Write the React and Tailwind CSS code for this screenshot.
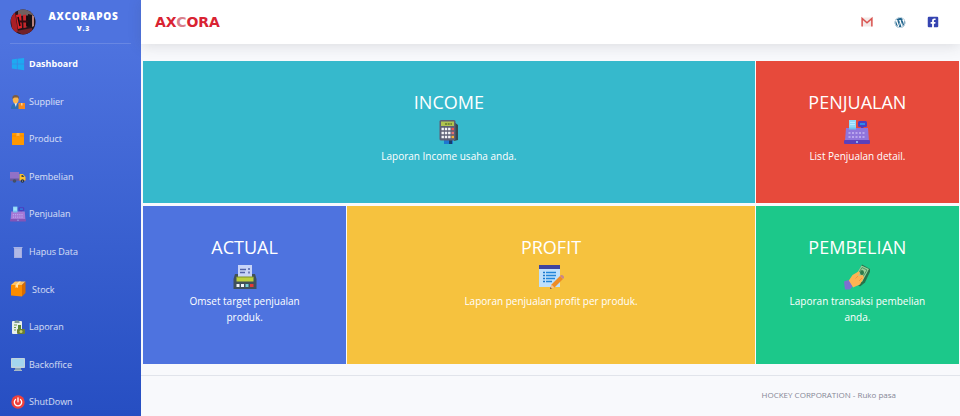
import React from "react";
import { FaWindows, FaWordpress, FaFacebookSquare } from "react-icons/fa";

const Svg = ({ box = 16, className = "h-4 w-4", children }) => (
  <svg viewBox={`0 0 ${box} ${box}`} className={className} aria-hidden="true">
    {children}
  </svg>
);

const SupplierIcon = () => (
  <Svg>
    <path d="M1 15c0-4 2-5.500 4.500-5.500S10 11 10 15z" fill="#2f6fb5" />
    <path d="M4.500 9h2.500l-1.200 4z" fill="#e8eef5" />
    <ellipse cx="5.700" cy="5.800" rx="2.900" ry="3.700" fill="#fdb74b" />
    <path d="M2.500 5C2 2 3.500 1 5.700 1S9.400 2 9 5L7.500 3.600h-3z" fill="#7a5c45" />
    <rect x="8.500" y="9" width="6.500" height="6" fill="#f68a1f" />
    <rect x="11" y="9" width="1.500" height="2.500" fill="#ffd08a" />
  </Svg>
);

const ProductIcon = () => (
  <Svg>
    <rect x="2" y="2" width="12" height="12" rx=".5" fill="#ff9800" />
    <path d="M2 5h12" stroke="#f08300" strokeWidth=".7" />
    <path d="M6.500 2h3v3.500l-1.500-.8-1.500.8z" fill="#ffb547" />
  </Svg>
);

const TruckIcon = () => (
  <Svg>
    <rect x="0" y="3" width="9" height="8" fill="#9271c6" />
    <rect x="0" y="9.500" width="15.500" height="2.500" fill="#66599f" />
    <path d="M9.500 5h3.500l2.500 3v3.500h-6z" fill="#fbc02d" />
    <path d="M11.500 6h1.300l1.500 2h-2.800z" fill="#374957" />
    <circle cx="4.500" cy="12" r="1.800" fill="#455064" />
    <circle cx="12.500" cy="12" r="1.800" fill="#2b3443" />
    <circle cx="12.500" cy="12" r=".6" fill="#b0bec5" />
  </Svg>
);

const RegisterIcon = ({ big = false }) => (
  <Svg box={26} className={big ? "h-[26px] w-[26px]" : "h-4 w-4"}>
    <rect x="5" y="1" width="7" height="10" fill="#8fd8f7" />
    <path d="M6 3.500h5M6 5.500h5" stroke="#b9ebff" />
    <rect x="17" y="6" width="2.500" height="4" fill="#5e35b1" />
    <rect x="14" y="2" width="9" height="6" rx="1.500" fill="#4a3fc0" />
    <rect x="16" y="4" width="5" height="2" fill="#2c8be8" />
    <path d="M2 9h22l1 13H1z" fill={big ? "#9075dc" : "#a678d5"} />
    <path d="M5 8.500h7v2H5z" fill="#70c3ed" />
    <path d="M4.500 14h17M4.500 18h17" stroke="#b9a6ee" strokeWidth="1.800" strokeDasharray="2 1.500" />
    <rect x="0" y="21" width="26" height="4" rx="1" fill={big ? "#5a40bc" : "#8254b8"} />
    <circle cx="13" cy="23" r="1" fill="#9ccbff" />
  </Svg>
);

const TrashIcon = () => (
  <Svg>
    <path d="M4 4h8v10H4z" fill="#a5aee2" />
    <path d="M3.500 3.500h9M6 5v8M8 5v8M10 5v8" stroke="#c3c9ee" strokeWidth=".8" />
  </Svg>
);

const StockIcon = () => (
  <Svg>
    <path d="M1 4l4-3.500h10.500L12 4z" fill="#ffc263" />
    <path d="M1 4h11v11.500L1 14.500z" fill="#fb8c00" />
    <path d="M12 4l3.500-3.500V12L12 15.500z" fill="#d96c00" />
    <path d="M5.500 4l3.500-3.500h2L8 4v3l-1.200-.8L5.500 7z" fill="#ffe2a8" />
  </Svg>
);

const ReportIcon = () => (
  <Svg>
    <rect x="2" y="2" width="10" height="13" rx="1" fill="#e8efec" />
    <path d="M4.500 2.500Q7 0 9.500 2.500v1.500h-5z" fill="#7d9792" />
    <path d="M4 6h3M4 8.500h2M4 11h2" stroke="#769d45" strokeWidth="1.100" />
    <rect x="8" y="6" width="3" height="4" fill="#57873a" />
    <rect x="7" y="10" width="8" height="5" rx="1" fill="#6c7f32" />
    <circle cx="11" cy="12.500" r="1.500" fill="#c6ce72" />
  </Svg>
);

const MonitorIcon = () => (
  <Svg>
    <path d="M5.500 11h5l1 3.500h-7z" fill="#8ca5b6" />
    <rect x="1" y="2" width="14" height="10" rx=".7" fill="#c2d3dc" />
    <rect x="2" y="3" width="12" height="7.500" fill="#a4d5ee" />
    <path d="M4 14.500h8" stroke="#a9bac5" />
  </Svg>
);

const PowerIcon = () => (
  <Svg>
    <circle cx="8" cy="8" r="6.700" fill="#f0413b" />
    <path d="M5.500 5.400a3.700 3.700 0 1 0 5 0M8 3.800v4" fill="none" stroke="#fff" strokeWidth="1.300" strokeLinecap="round" />
  </Svg>
);

const GmailIcon = () => (
  <Svg className="h-3 w-3">
    <rect x="1" y="2" width="14" height="12" rx="1" fill="#f3e9e8" />
    <path d="M1.500 14V3.200L8 9l6.500-5.800V14" fill="none" stroke="#d9534f" strokeWidth="2" />
  </Svg>
);

const FacebookIcon = () => <FaFacebookSquare className="h-3 w-3 text-[#3544b1]" />;

const Avatar = () => (
  <Svg box={26} className="h-[26px] w-[26px] shrink-0">
    <defs>
      <clipPath id="avatar-disc">
        <circle cx="13" cy="13" r="12.500" />
      </clipPath>
    </defs>
    <g clipPath="url(#avatar-disc)">
      <rect width="26" height="26" fill="#251419" />
      <path d="M0 6l5-3 3 20-5 2z" fill="#a91f26" />
      <path d="M8 0h14l3 6-17 1z" fill="#71605f" />
      <path d="M6 6l5-1 1 14-4 1z" fill="#e02328" />
      <path d="M13 6l3-.5.500 13-3 .5z" fill="#c5272c" />
      <path d="M18 5l4 1v11l-4 1z" fill="#181014" />
      <path d="M8 8l2 9M17 7v10" stroke="#12080b" strokeWidth="1.500" />
      <path d="M9 12.500h9" stroke="#320b10" strokeWidth="2" />
      <path d="M22 6l2 1v10l-2 1z" fill="#b8837e" />
      <path d="M6 22l16-3v4l-9 3z" fill="#722128" />
    </g>
  </Svg>
);

const CalculatorIcon = () => (
  <Svg box={26} className="h-[26px] w-[26px]">
    <path d="M18 3l4 3v15l-4 1z" fill="#36484e" />
    <path d="M8 20h9v5H8z" fill="#1d77d2" />
    <path d="M13 21h3v4h-3z" fill="#173e6d" />
    <rect x="3.500" y="1" width="16" height="20.500" rx="1.500" fill="#5c5f75" />
    <rect x="5" y="2.500" width="13" height="4.500" fill="#b0c34f" />
    <path d="M9 5h7" stroke="#5f7a2d" strokeWidth="1.500" strokeDasharray="2 .7" />
    <path d="M5.500 10h9M5.500 14h9M5.500 18h9" stroke="#f2f2f6" strokeWidth="2.400" strokeDasharray="2.400 .9" />
    <path d="M15.500 8.800H18v2.400h-2.500z" fill="#ef5350" />
    <path d="M15.500 12.800H18v2.400h-2.500z" fill="#e57373" />
    <path d="M15.500 16.800H18v2.400h-2.500z" fill="#f9b233" />
  </Svg>
);

const PrinterIcon = () => (
  <Svg box={26} className="h-[26px] w-[26px]">
    <path d="M3 10h20l1.500 5v10h-23V15z" fill="#40505a" />
    <path d="M6 1h14v12H6z" fill="#c8d4f8" />
    <path d="M8 5.500h6M8 8.500h5" stroke="#5262a8" strokeWidth="1.300" />
    <path d="M17 4v2M17 7.500v2" stroke="#5262a8" strokeWidth="1.500" />
    <rect x="4.500" y="13" width="17" height="4.500" fill="#bdd03d" />
    <path d="M4.500 13h17" stroke="#7e922a" />
    <path d="M4.500 20h3v3h-3zM9 20h3v3H9z" fill="#f4f6fa" />
    <path d="M13.500 20h3v3h-3z" fill="#78d1d6" />
    <path d="M18 20h3.500v3H18z" fill="#e53935" />
  </Svg>
);

const NotesIcon = () => (
  <Svg box={26} className="h-[26px] w-[26px]">
    <rect x="1" y="1" width="21" height="22" fill="#bfe0fb" />
    <rect x="1" y="1" width="21" height="4" fill="#3f459e" />
    <path d="M5 8.500h2M5 11.500h2M5 14.500h2M5 17.500h2" stroke="#1c78cc" strokeWidth="1.300" />
    <path d="M8 8.500h10M8 11.500h10M8 14.500h9M8 17.500h6" stroke="#2386d9" strokeWidth="1.300" />
    <path d="M12 25l1.500-4.500L22 12l3 3-8.500 8.500z" fill="#ee8b25" />
    <path d="M22 12l1-1q1.500-.5 2.500 1t.5 2l-1 1z" fill="#c98789" />
    <path d="M12 25l1.500-4.500 3 3z" fill="#f7c38a" />
    <path d="M12 25l.6-1.800 1.200 1.200z" fill="#5b4138" />
  </Svg>
);

const MoneyIcon = () => (
  <Svg box={26} className="h-[26px] w-[26px]">
    <path d="M18 .5l9 5-6 13-5 4-7-5z" fill="#26734b" />
    <path d="M17.500 1.500L25 5l-7 13-8-4z" fill="#9ad09a" />
    <path d="M18 3.500l5 2.500-6 10-5-2.500z" fill="none" stroke="#3b8656" strokeWidth=".8" />
    <ellipse cx="18" cy="8.500" rx="2" ry="2.500" fill="#2f7a4b" />
    <path d="M4.500 17l4-6 6-3.500q2 .5 1 2.500l-1.500 2 4-1q2.500 1 1.500 3.500l-3.500 6-7 3z" fill="#fdb353" />
    <path d="M14 12l-2.500 2.500M18 14l-3 3" fill="none" stroke="#e8923a" strokeWidth=".8" />
    <path d="M0 17.500l4.500-1.500 4 6.500-2.500 3H1z" fill="#7d6fd0" />
  </Svg>
);

const navItems = [
  { label: "Dashboard", icon: <FaWindows className="h-3.5 w-3.5 text-[#1eaaf1]" />, active: true },
  { label: "Supplier", icon: <SupplierIcon /> },
  { label: "Product", icon: <ProductIcon /> },
  { label: "Pembelian", icon: <TruckIcon /> },
  { label: "Penjualan", icon: <RegisterIcon /> },
  { label: "Hapus Data", icon: <TrashIcon /> },
  { label: "Stock", icon: <StockIcon />, wide: true },
  { label: "Laporan", icon: <ReportIcon /> },
  { label: "Backoffice", icon: <MonitorIcon /> },
  { label: "ShutDown", icon: <PowerIcon /> },
];

const cards = [
  { title: "INCOME", text: "Laporan Income usaha anda.", icon: <CalculatorIcon />, style: "col-span-3 bg-[#36b9cc]" },
  { title: "PENJUALAN", text: "List Penjualan detail.", icon: <RegisterIcon big />, style: "bg-[#e74a3b]" },
  { title: "ACTUAL", text: "Omset target penjualan produk.", icon: <PrinterIcon />, style: "bg-[#4e73df]" },
  { title: "PROFIT", text: "Laporan penjualan profit per produk.", icon: <NotesIcon />, style: "col-span-2 bg-[#f6c23e]" },
  { title: "PEMBELIAN", text: "Laporan transaksi pembelian anda.", icon: <MoneyIcon />, style: "bg-[#1cc88a]" },
];

function Sidebar() {
  return (
    <aside className="flex w-[141px] shrink-0 flex-col bg-linear-to-b from-[#4e73df] from-10% to-[#264ec2] px-2.5">
      <a href="#home" className="flex h-[44px] items-center border-b border-white/15 text-white">
        <Avatar />
        <span className="flex-1 text-center font-extrabold tracking-wider">
          <span className="block text-[10px] leading-[14px]">AXCORAPOS</span>
          <span className="block text-[7px] leading-[12px]">V.3</span>
        </span>
      </a>
      <nav className="flex flex-1 flex-col justify-between pt-3 pb-1.5">
        {navItems.map((item) => (
          <a
            key={item.label}
            href={`#${item.label}`}
            className={`flex h-4 items-center text-[9px] ${item.active ? "font-bold text-white" : "text-white/80"}`}
          >
            <span className={`flex w-4 shrink-0 justify-center ${item.wide ? "mr-1.5" : "mr-[3px]"}`}>{item.icon}</span>
            {item.label}
          </a>
        ))}
      </nav>
    </aside>
  );
}

function Card({ title, text, icon, style }) {
  return (
    <a href={`#${title}`} className={`flex flex-col items-center px-8 pt-[29px] pb-[39px] text-center text-white ${style}`}>
      <h2 className="text-[18px] leading-6">{title}</h2>
      <span className="mt-[5px] mb-[3px]">{icon}</span>
      <p className="text-[10px] leading-4">{text}</p>
    </a>
  );
}

export default function App() {
  return (
    <div className="flex min-h-screen bg-[#f8f9fc] font-['Open_Sans','Noto_Sans',sans-serif]">
      <Sidebar />
      <div className="flex min-w-0 flex-1 flex-col">
        <header className="flex h-[44px] items-center justify-between bg-white pr-[21px] pl-3.5 shadow-[0_2px_14px_rgba(58,59,69,0.15)]">
          <a href="#axcora" className="font-['DejaVu_Sans',sans-serif] text-[14px] leading-4 font-bold text-[#d92332]">
            AX<span className="text-[#d9808c]">C</span>ORA
          </a>
          <div className="flex items-center gap-[21px]">
            <a href="#mail" aria-label="Gmail"><GmailIcon /></a>
            <a href="#wordpress" aria-label="WordPress"><FaWordpress className="h-[11px] w-3 text-[#21658e]" /></a>
            <a href="#facebook" aria-label="Facebook"><FacebookIcon /></a>
          </div>
        </header>
        <main className="mt-[17px] grid grid-cols-4 gap-x-px gap-y-[3px] pr-px pl-0.5">
          {cards.map((card) => (
            <Card key={card.title} {...card} />
          ))}
        </main>
        <footer className="mt-[11px] flex-1 border-t border-[#e1e4eb] pt-[11px] pr-16 text-right text-[8px] leading-4 text-[#858796]">
          HOCKEY CORPORATION - Ruko pasa
        </footer>
      </div>
    </div>
  );
}
